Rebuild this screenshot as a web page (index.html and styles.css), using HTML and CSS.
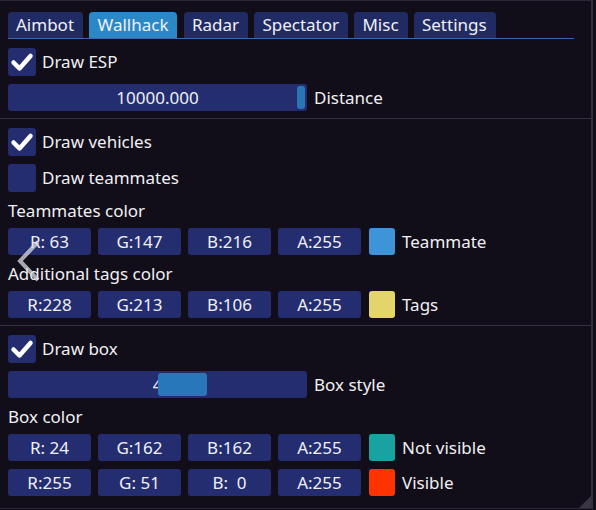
FILE: index.html
```html
<!DOCTYPE html>
<html>
<head>
<meta charset="utf-8">
<link rel="stylesheet" href="styles.css">
</head>
<body>
<div class="window">
  <div class="tabs">
    <div class="tab">Aimbot</div>
    <div class="tab active">Wallhack</div>
    <div class="tab">Radar</div>
    <div class="tab">Spectator</div>
    <div class="tab">Misc</div>
    <div class="tab">Settings</div>
  </div>
  <div class="content">
    <div class="check-row"><span class="box on"><svg viewBox="0 0 28 28" class="tick"><path d="M5.5 14.5 L11.5 20.5 L22.5 8" /></svg></span><span>Draw ESP</span></div>
    <div class="slider-row"><div class="slider"><span class="val">10000.000</span><span class="grab g1"></span></div><span>Distance</span></div>
    <div class="sep"></div>
    <div class="check-row"><span class="box on"><svg viewBox="0 0 28 28" class="tick"><path d="M5.5 14.5 L11.5 20.5 L22.5 8" /></svg></span><span>Draw vehicles</span></div>
    <div class="check-row"><span class="box"></span><span>Draw teammates</span></div>
    <div class="label">Teammates color</div>
    <div class="color-row"><span class="fld">R: 63</span><span class="fld">G:147</span><span class="fld">B:216</span><span class="fld">A:255</span><span class="sw sw-blue"></span><span>Teammate</span></div>
    <div class="label">Additional tags color</div>
    <div class="color-row"><span class="fld">R:228</span><span class="fld">G:213</span><span class="fld">B:106</span><span class="fld">A:255</span><span class="sw sw-yellow"></span><span>Tags</span></div>
    <div class="sep"></div>
    <div class="check-row"><span class="box on"><svg viewBox="0 0 28 28" class="tick"><path d="M5.5 14.5 L11.5 20.5 L22.5 8" /></svg></span><span>Draw box</span></div>
    <div class="slider-row"><div class="slider"><span class="val">4</span><span class="grab g2"></span></div><span>Box style</span></div>
    <div class="label">Box color</div>
    <div class="color-row"><span class="fld">R: 24</span><span class="fld">G:162</span><span class="fld">B:162</span><span class="fld">A:255</span><span class="sw sw-teal"></span><span>Not visible</span></div>
    <div class="color-row"><span class="fld">R:255</span><span class="fld">G: 51</span><span class="fld">B:&nbsp; 0</span><span class="fld">A:255</span><span class="sw sw-red"></span><span>Visible</span></div>
  </div>
  <svg class="arrow" viewBox="0 0 26 44"><path d="M22 3 L4 22 L22 41" /></svg>
  <div class="grip"></div>
</div>
</body>
</html>
```
FILE: styles.css
```css
html, body {
  margin: 0;
  padding: 0;
  background: #110d19;
}
body {
  width: 596px;
  height: 510px;
  overflow: hidden;
  font-family: "Noto Sans", "DejaVu Sans", sans-serif;
  font-size: 17px;
  line-height: 20px;
  color: #f0f0f4;
}
.window {
  position: relative;
  box-sizing: border-box;
  width: 593px;
  height: 509px;
  border-top: 1px solid #2a2734;
  border-right: 2px solid #33303c;
  border-bottom: 1px solid #2a2734;
  padding: 11px 17px 0 8px;
  background: #110d19;
}
.tabs {
  display: flex;
  gap: 6.4px;
  height: 26px;
  border-bottom: 1px solid #3d66ad;
  align-items: flex-end;
}
.tab {
  height: 26px;
  padding: 0 9px 0 8px;
  background: #212b63;
  border-radius: 4px 4px 0 0;
  line-height: 25px;
}
.tab.active {
  background: #2a88c6;
}
.content {
  display: flex;
  flex-direction: column;
  gap: 8px;
  padding-top: 9px;
}
.check-row {
  display: flex;
  align-items: center;
  gap: 6px;
  height: 28px;
}
.box {
  width: 28px;
  height: 28px;
  border-radius: 3px;
  background: #232d6f;
  display: flex;
  align-items: center;
  justify-content: center;
}
.tick {
  width: 28px;
  height: 28px;
}
.tick path {
  fill: none;
  stroke: #ffffff;
  stroke-width: 4.5;
  stroke-linecap: round;
  stroke-linejoin: round;
}
.slider-row {
  display: flex;
  align-items: center;
  gap: 7px;
  height: 27px;
}
.slider {
  position: relative;
  width: 299px;
  height: 27px;
  border-radius: 3px;
  background: #232d6f;
  display: flex;
  align-items: center;
  justify-content: center;
}
.val {
  position: relative;
}
.grab {
  position: absolute;
  top: 2px;
  height: 23px;
  border-radius: 3px;
  background: #2876b8;
}
.g1 {
  left: 289px;
  width: 8px;
}
.g2 {
  left: 150px;
  width: 49px;
  background: #2877ba;
}
.sep {
  height: 1px;
  background: #353244;
  margin: -1px -17px 1px -8px;
}
.label {
  height: 19px;
  line-height: 19px;
  margin-top: 1px;
}
.color-row {
  display: flex;
  align-items: center;
  height: 27px;
}
.fld {
  width: 83px;
  height: 27px;
  margin-right: 7px;
  border-radius: 3px;
  background: #232d6f;
  text-align: center;
  line-height: 27px;
}
.sw {
  width: 26px;
  height: 27px;
  border-radius: 3px;
  margin: 0 7px 0 1px;
}
.sw-blue { background: #3f93d8; }
.sw-yellow { background: #e4d56a; }
.sw-teal { background: #18a2a2; }
.sw-red { background: #ff3300; }
.arrow {
  position: absolute;
  left: 16px;
  top: 238px;
  width: 26px;
  height: 44px;
}
.arrow path {
  fill: none;
  stroke: rgba(220, 220, 225, 0.75);
  stroke-width: 4;
}
.grip {
  position: absolute;
  right: 0;
  bottom: 0;
  width: 0;
  height: 0;
  border-left: 12px solid transparent;
  border-bottom: 12px solid #3a3744;
}
```
